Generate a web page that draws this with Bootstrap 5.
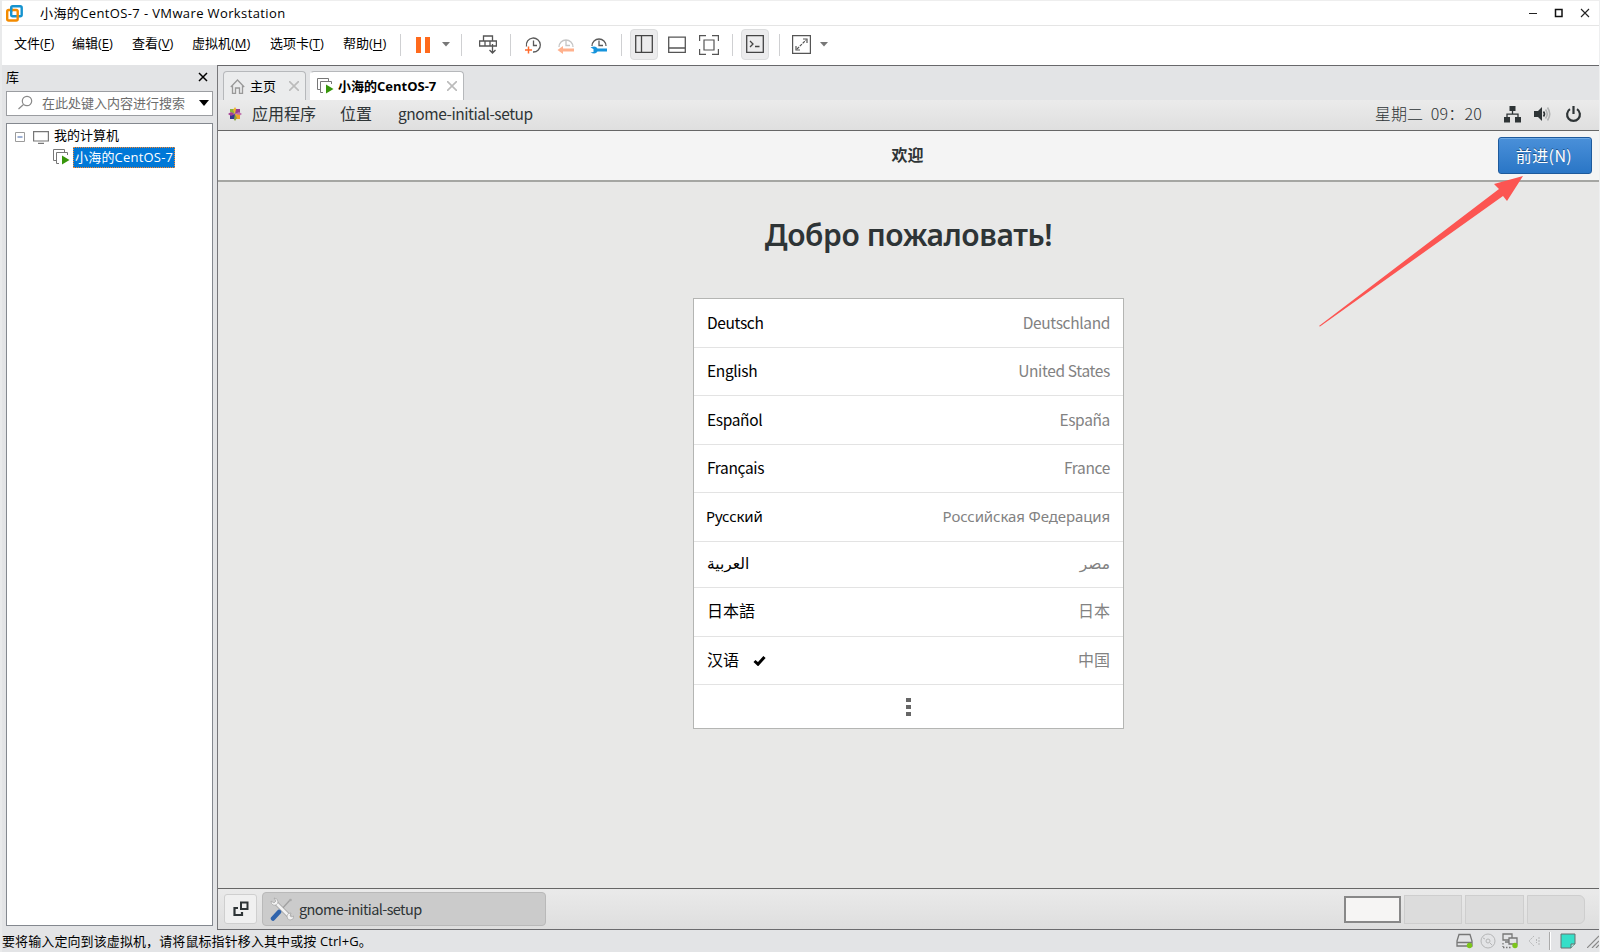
<!DOCTYPE html>
<html lang="zh-CN">
<head>
    <meta charset="UTF-8">
    <title>小海的CentOS-7 - VMware Workstation</title>
    <link href="https://cdn.jsdelivr.net/npm/bootstrap@5.3.0/dist/css/bootstrap.min.css" rel="stylesheet">
    <style>
        body {
            height: 952px;
            overflow: hidden;
            background: #e3e4e6;
            color: #000;
            font: 13px/18px "Open Sans", "Noto Sans CJK SC", sans-serif;
            border-left: 2px solid #e9eaeb;
            border-right: 1px solid #eeeff0;
        }
        svg { display: block; flex: none; fill: none; }

        /* title and menu */
        .title-bar { height: 26px; border-top: 1px solid #eee; border-bottom: 1px solid #e5e5e5; }
        .title-text { margin-left: 17px; font-size: 13px; letter-spacing: .38px; }
        .win-buttons { gap: 16px; padding-right: 9px; }
        .menu-row { height: 39px; }
        .menus { width: 391px; padding: 0 0 6px 12px; font-size: 13px; }
        .menus span { white-space: nowrap; }
        .menus span:nth-child(1) { width: 58px; }
        .menus span:nth-child(2), .menus span:nth-child(3) { width: 60px; }
        .menus span:nth-child(4) { width: 78px; }
        .menus span:nth-child(5) { width: 73px; }
        .menus u { text-underline-offset: 2px; }
        .tools {
            display: grid;
            margin: -2px 0 0 3px;
            grid-template-columns: 8px 37px 9px 22px 31px 14px 32px 34px 31px 14px 32px 34px 30px 16px 30px 18px 27px 18px;
            align-items: center;
            justify-items: center;
        }
        .split { width: 1px; height: 22px; background: #cfd0d2; }
        .tool-on { width: 28px; height: 31px; padding: 6px 5px; background: #ececed; border: 1px solid #dcddde; border-radius: 4px; }
        .tool-on svg { margin: -1px 0 0 -1px; }

        /* library */
        .library { width: 215px; padding: 0 4px 4px 4px; }
        .library-head { height: 26px; padding: 0 5px 2px 0; }
        .search-box { height: 25px; border: 1px solid #9b9da1; background: #fff; color: #6d6d6d; padding: 0 3px 2px 11px; }
        .tree { margin-top: 7px; border: 1px solid #84888f; background: #fff; }
        .tree-line { height: 22px; }
        .tree-sel { height: 21px; line-height: 18px; padding: 0 1px; background: #0078d7; color: #fff; border: 1px dotted #ff8728; letter-spacing: .2px; }

        /* console */
        .console-area { border-left: 1px solid #77777a; border-top: 1px solid #68686b; border-bottom: 1px solid #6b6b6e; }
        .tab-strip { height: 34px; padding: 5px 0 0 5px; gap: 4px; }
        .vm-tab { border: 1px solid #b6b8bb; border-bottom: 0; border-radius: 4px 4px 0 0; padding: 0 6px; background: #ebeced; }
        .vm-tab.on { background: #fff; font-weight: 700; font-size: 13px; border-left-color: #fff; }
        .gnome { font-family: "Noto Sans CJK SC", sans-serif; font-size: 16px; color: #2e3436; }
        .top-panel { height: 31px; background: linear-gradient(#ebebeb, #dfdfdf); border-bottom: 1px solid #666; padding: 0 0 2px 10px; }
        .panel-text, .app-name { padding-bottom: 2px; }
        .app-name { font-size: 15.5px; letter-spacing: -.45px; }
        .setup-head { height: 51px; background: #f4f4f4; border-bottom: 2px solid #a5a6a3; }
        .next-btn {
            width: 94px; height: 37px; padding: 0 2px 2px 0; margin-right: 7px;
            border: 1px solid #1e5a9c; border-radius: 3px;
            background: linear-gradient(#4a90d9, #2a76c6);
            box-shadow: inset 0 1px #6faae6;
            color: #fff; font-size: 16px; letter-spacing: .4px;
            text-shadow: 0 -1px #1c5187;
        }
        .page { background: #e8e8e7; }
        .welcome { height: 116px; padding-top: 33px; font: 600 30px/40px "Noto Sans", sans-serif; letter-spacing: -.4px; color: #2e3436; }
        .lang-list { width: 431px; height: 431px; border: 1px solid #b4b5b3; background: #fff; color: #000; }
        .lang-row { height: 48.5px; padding: 0 13px 2px; border-bottom: 1px solid #e3e3e3; font-size: 15.5px; letter-spacing: -.35px; }
        .lang-row.arab { height: 46.5px; font-family: "DejaVu Sans", sans-serif; font-size: 15.5px; letter-spacing: 0; padding-bottom: 0; }
        .lang-row.cyr { font-family: "Noto Sans", sans-serif; font-size: 15px; letter-spacing: -.1px; padding-left: 12px; padding-bottom: 1px; }
        .lang-row.cjk { font-size: 16px; letter-spacing: 0; padding-bottom: 3px; }
        .country { color: #828282; }
        .task-bar { height: 41px; border-top: 1px solid #666; background: linear-gradient(#eaeaea, #dedede); padding: 0 14px 0 6px; }
        .desk-btn { width: 33px; height: 30px; border: 1px solid #cfcfcf; border-radius: 3px; background: #f0f0f0; }
        .task-btn { width: 284px; height: 34px; margin-left: 5px; padding-left: 7px; border: 1px solid #b9b9b9; border-radius: 4px; background: #cbcbcb; }
        .task-name { font-size: 14.5px; letter-spacing: -.6px; }
        .workspaces { gap: 3px; }
        .workspace { width: 58.5px; height: 29px; background: #dcdcdc; border: 1px solid #cecece; }
        .workspace.on { width: 57px; height: 27px; background: #f6f5f4; border: 2px solid #888; }
        .status-bar { height: 22px; letter-spacing: .1px; }

        .pointer-arrow { position: absolute; left: 1310px; top: 170px; pointer-events: none; }
    </style>
</head>
<body class="d-flex flex-column">

<!-- Window title -->
<header class="title-bar bg-white d-flex align-items-center">
    <svg class="ms-1" width="17" height="17" viewBox="0 0 17 17" stroke-width="2.4"><rect x="5.2" y="1.2" width="10.5" height="10" rx="1.5" stroke="#1593cf"/><rect x="1.2" y="5" width="10.5" height="10.5" rx="1.5" stroke="#f38b00"/><path d="M5.2 7V3" stroke="#1593cf"/></svg>
    <span class="title-text">小海的CentOS-7 - VMware Workstation</span>
    <div class="win-buttons d-flex align-items-center ms-auto">
        <svg width="10" height="10" stroke="#222"><path d="M1 5.5h8"/></svg>
        <svg width="10" height="10" stroke="#111" stroke-width="1.5"><rect x="1.5" y="1.5" width="6.5" height="7"/></svg>
        <svg width="10" height="10" stroke="#222" stroke-width="1.1"><path d="m1 1 8 8M9 1 1 9"/></svg>
    </div>
</header>

<!-- Menu and tool bar -->
<nav class="menu-row bg-white d-flex">
    <div class="menus d-flex align-items-center">
        <span>文件(<u>F</u>)</span>
        <span>编辑(<u>E</u>)</span>
        <span>查看(<u>V</u>)</span>
        <span>虚拟机(<u>M</u>)</span>
        <span>选项卡(<u>T</u>)</span>
        <span>帮助(<u>H</u>)</span>
    </div>
    <div class="tools">
        <i class="split"></i>
        <svg width="14" height="18"><path d="M0 1h5v16H0zM9 1h5v16H9z" fill="#ff6a1c"/></svg>
        <svg width="8" height="5"><path d="M0 0h8L4 4.5z" fill="#777"/></svg>
        <i class="split"></i>
        <svg width="18" height="19" stroke="#555" stroke-width="1.3"><path d="M4.500 6V1h9v5M.6 6h10.400v5H.6zM11 6h6.400v5H11M6 6v5M13.500 9v9M10.500 15l3 3 3-3"/></svg>
        <i class="split"></i>
        <svg width="18" height="18" stroke="#5a5a5a" stroke-width="1.3"><path d="M2.500 10.500A7 7 0 1 1 9 16M9.500 4.500v5H13"/><path d="M1 14h7M4.500 10.500v7" stroke="#ff6a2c" stroke-width="1.500"/></svg>
        <svg width="18" height="18" stroke="#c5c5c5" stroke-width="1.3"><path d="M2 11a7 7 0 1 1 14 0M9 4.500v5h4"/><path d="M17 12.500H6V10l-5.500 4L6 18v-2.500h11z" fill="#ffb18d" stroke="none"/></svg>
        <svg width="18" height="18" stroke="#5a5a5a" stroke-width="1.3"><path d="M2 10a7 7 0 1 1 14 0M9 4.500v5h4"/><path d="M.5 11.500q5-2.500 7 1h9.500v3H7.500q-2 3.500-7 1L3.500 16v-3z" fill="#1694dc" stroke="none"/></svg>
        <i class="split"></i>
        <span class="tool-on"><svg width="18" height="18" stroke="#444" stroke-width="1.3"><path d="M.7.7h16.600v16.600H.7zM6.500 .7v16.600"/></svg></span>
        <svg width="18" height="18" stroke="#555" stroke-width="1.3"><path d="M.7 1.200h16.600v15.200H.7zM.7 12h16.600"/></svg>
        <svg width="20" height="20" stroke="#555" stroke-width="1.200"><path d="M.6 6V.6H7M13 .6h6.400V6M19.400 14v5.400H13M7 19.400H.6V14M5 5h10v10H5z"/></svg>
        <i class="split"></i>
        <span class="tool-on"><svg width="18" height="18" stroke="#444" stroke-width="1.300"><path d="M.7.7h16.600v16.600H.7zM4 6l3 3-3 3M9 11.500h4.500"/></svg></span>
        <i class="split"></i>
        <svg width="19" height="19" stroke="#555" stroke-width="1.200"><path d="M.6.6h17.800v17.800H.6zM4 11v4h4M11 4h4v4"/><path d="m5 14 9-9" stroke-dasharray="3 1"/></svg>
        <svg width="8" height="5"><path d="M0 0h8L4 4.500z" fill="#777"/></svg>
    </div>
</nav>

<div class="d-flex flex-grow-1">
    <!-- Library -->
    <aside class="library d-flex flex-column">
        <div class="library-head d-flex align-items-center justify-content-between">
            <span>库</span>
            <svg width="10" height="10" stroke="#000" stroke-width="1.500"><path d="m1 1 8 8M9 1 1 9"/></svg>
        </div>
        <div class="search-box d-flex align-items-center">
            <svg width="15" height="15" stroke="#8a8a8a" stroke-width="1.200"><circle cx="9" cy="6" r="4.700"/><path d="m5.500 9.500-5 4.500"/></svg>
            <span class="text-nowrap" style="margin-left:9px">在此处键入内容进行搜索</span>
            <svg class="ms-auto" width="10" height="6"><path d="M0 0h10L5 6z" fill="#000"/></svg>
        </div>
        <div class="tree flex-grow-1">
            <div class="tree-line d-flex align-items-center">
                <svg class="ms-2 mt-1" width="10" height="10"><path d="M.5.5h9v9h-9z" stroke="#9b9b9b"/><path d="M2.500 5h5" stroke="#3f62a8"/></svg>
                <svg class="mt-1" style="margin-left:8px" width="16" height="13" stroke="#777" stroke-width="1.200"><path d="M.6.6h14.800v9.400H.6zM5 12.400h6"/></svg>
                <span style="margin-left:5px">我的计算机</span>
            </div>
            <div class="tree-line d-flex align-items-center">
                <svg style="margin-left:46px" width="17" height="16" stroke="#777"><path d="M3 11.500H.5V.5h11V3M6 14.500H3.500v-11h11V6"/><path d="m9 6.500 7.500 4.500L9 15.500z" fill="#37960b" stroke="none"/></svg>
                <span class="tree-sel text-nowrap" style="margin-left:3px">小海的CentOS-7</span>
            </div>
        </div>
    </aside>

    <!-- Virtual machine -->
    <main class="console-area flex-grow-1 d-flex flex-column">
        <div class="tab-strip d-flex">
            <div class="vm-tab d-flex align-items-center" style="width:83px">
                <svg width="15" height="15" stroke="#999" stroke-width="1.300"><path d="m.8 8 6.700-7 6.700 7M2.500 6.500v7.800h3V9h4v5.300h3V6.500"/></svg>
                <span style="margin-left:5px">主页</span>
                <svg class="ms-auto" width="10" height="10" stroke="#bbb" stroke-width="1.600"><path d="m0 0 10 10M10 0 0 10"/></svg>
            </div>
            <div class="vm-tab on d-flex align-items-center" style="width:154px">
                <svg width="17" height="16" stroke="#777"><path d="M3 11.500H.5V.5h11V3M6 14.500H3.500v-11h11V6"/><path d="m9 6.500 7.500 4.500L9 15.500z" fill="#37960b" stroke="none"/></svg>
                <span class="text-nowrap" style="margin-left:4px">小海的CentOS-7</span>
                <svg class="ms-auto" width="10" height="10" stroke="#bbb" stroke-width="1.600"><path d="m0 0 10 10M10 0 0 10"/></svg>
            </div>
        </div>

        <div class="gnome flex-grow-1 d-flex flex-column">
            <div class="top-panel d-flex align-items-center">
                <svg width="14" height="14"><path d="M2 2h4l1 5-5-2z" fill="#8cb43c"/><path d="M7 0 5 3l2 4 2-4z" fill="#efb734"/><path d="M8 2h4v4L7 7z" fill="#9c3d90"/><path d="m14 7-3-2-4 2 4 2z" fill="#c072ad"/><path d="M12 8v4H8L7 7z" fill="#f0a42c"/><path d="m7 14 2-3-2-4-2 4z" fill="#8aa53d"/><path d="M6 12H2V8l5-1z" fill="#35388f"/><path d="m0 7 3-2 4 2-4 2z" fill="#a63f92"/></svg>
                <span class="panel-text" style="margin-left:10px;width:88px">应用程序</span>
                <span class="panel-text" style="width:58px">位置</span>
                <span class="app-name">gnome-initial-setup</span>
                <span class="panel-text fw-light ms-auto" style="letter-spacing:.2px">星期二&nbsp; 09：20</span>
                <svg style="margin-left:22px" width="17" height="17"><path d="M5.500 0h6v5h-6zM0 11h6v5.500H0zM11 11h6v5.500h-6z" fill="#2e3436"/><path d="M8.500 5v3M3 11V8.200h11V11" stroke="#2e3436" stroke-width="1.300"/></svg>
                <svg style="margin-left:13px" width="17" height="16"><path d="M0 5h4l4-4v14l-4-4H0z" fill="#2e3436"/><path d="M9.500 5.500q2 2.500 0 5" stroke="#2e3436" stroke-width="1.600"/><path d="M11.500 3.500q3.500 4.500 0 9M13.500 1.500q4.500 6.500 0 13" stroke="#b1b3b3" stroke-width="1.600"/></svg>
                <svg style="margin:0 17px 0 14px" width="17" height="17" stroke="#2e3436" stroke-width="2.200"><path d="M5 3.200a6.400 6.400 0 1 0 7 0M8.500 0v8"/></svg>
            </div>

            <div class="setup-head d-flex align-items-center">
                <div style="width:99px"></div>
                <strong class="flex-grow-1 text-center pb-1">欢迎</strong>
                <button class="next-btn btn">前进(N)</button>
            </div>

            <div class="page flex-grow-1 d-flex flex-column align-items-center">
                <h1 class="welcome m-0">Добро пожаловать!</h1>
                <div class="lang-list" id="lang-list"></div>
            </div>

            <div class="task-bar d-flex align-items-center">
                <div class="desk-btn d-flex align-items-center justify-content-center">
                    <svg width="16" height="16" stroke="#2e3436" stroke-width="2"><path d="M8 1.500h6.500V8H8z"/><path d="M5 7H1.500v7H9v-3" stroke-width="2.200"/></svg>
                </div>
                <div class="task-btn d-flex align-items-center">
                    <svg width="24" height="24"><path d="M20 3 11 13" stroke="#a0a0a0" stroke-width="1.300"/><circle cx="20.500" cy="3" r="1.300" fill="#aaa"/><path d="M5 5 20 20" stroke="#999" stroke-width="4"/><path d="M5 5 20 20" stroke="#f2f2f2" stroke-width="2.800"/><path d="M1 4l3 2 2-2-2-3q4 0 4 4-1 4-5 3-2-1-2-4M17 19q0-3 4-3l-1 3 2 1 2-1q0 4-4 4-3 0-3-4" fill="#f4f4f4" stroke="#999" stroke-width=".6"/><path d="m9 15-6 6.500" stroke="#2f63ac" stroke-width="4.500" stroke-linecap="round"/></svg>
                    <span class="task-name" style="margin-left:5px">gnome-initial-setup</span>
                </div>
                <div class="workspaces d-flex align-items-center ms-auto">
                    <div class="workspace on"></div>
                    <div class="workspace"></div>
                    <div class="workspace"></div>
                    <div class="workspace rounded-end"></div>
                </div>
            </div>
        </div>
    </main>
</div>

<!-- Status -->
<footer class="status-bar d-flex align-items-center">
    <span>要将输入定向到该虚拟机，请将鼠标指针移入其中或按 Ctrl+G。</span>
    <div class="d-flex align-items-center ms-auto">
        <svg width="18" height="16" stroke="#777" stroke-width="1.300"><path d="m1 8 2-6.500h11L16 8v5H1zM1 9.500h15"/><circle cx="13.500" cy="12.500" r="2.700" fill="#7cc51d" stroke="none"/></svg>
        <svg style="margin-left:6px" width="16" height="16" stroke="#b5b6b7"><circle cx="8" cy="8" r="7"/><circle cx="8" cy="8" r="2"/><path d="m3 5 2 1M10 10l2 2"/></svg>
        <svg style="margin-left:6px" width="17" height="16" stroke="#777" stroke-width="1.300"><path d="M1 1h9v6H1zM3 9h5"/><path d="M7 5h8v6H7z" fill="#e3e4e6"/><path d="M1 14.500h9M1 10v4" stroke-dasharray="1.500 1.500"/><circle cx="13" cy="12.500" r="2.700" fill="#7cc51d" stroke="none"/></svg>
        <svg style="margin-left:9px" width="12" height="14" stroke="#b5b6b7"><path d="M6 2 1 7l5 5M8.500 5v4M11 3v8" stroke-dasharray="2 1"/></svg>
        <i class="split bg-white" style="width:2px;margin:0 9px;height:18px;border-left:1px solid #aaa"></i>
        <svg width="16" height="16"><path d="M1 1h14v10l-4 4H1z" fill="#36dfc8" stroke="#66716f"/><path d="M11 15v-4h4" fill="#9feee3" stroke="#66716f"/></svg>
        <svg style="margin-left:11px" width="12" height="14" stroke="#888" stroke-width="1.200"><path d="M0 14 12 2M5 14l7-7M9 14l3-3"/></svg>
    </div>
</footer>

<svg class="pointer-arrow" width="220" height="160"><path d="m213 6-29 8 5 5L9 156l1 .5L193 26l4 5z" fill="#fc5552"/></svg>

<script src="https://cdn.jsdelivr.net/npm/bootstrap@5.3.0/dist/js/bootstrap.bundle.min.js"></script>
<script>
    const languages = [
        { name: 'Deutsch', country: 'Deutschland' },
        { name: 'English', country: 'United States' },
        { name: 'Español', country: 'España' },
        { name: 'Français', country: 'France' },
        { name: 'Русский', country: 'Российская Федерация', cls: 'cyr' },
        { name: 'العربية', country: 'مصر', cls: 'arab' },
        { name: '日本語', country: '日本', cls: 'cjk' },
        { name: '汉语', country: '中国', cls: 'cjk', selected: true }
    ];
    const check = '<svg style="margin:3px 0 0 14px" width="13" height="11"><path d="m1.500 6 3.500 3.200L11.500 2" stroke="#000" stroke-width="3"/></svg>';
    const list = document.getElementById('lang-list');

    languages.forEach(lang => {
        list.insertAdjacentHTML('beforeend', `
            <div class="lang-row d-flex align-items-center ${lang.cls || ''}">
                <span>${lang.name}</span>${lang.selected ? check : ''}
                <span class="country ms-auto">${lang.country}</span>
            </div>
        `);
    });

    // "more" row
    list.insertAdjacentHTML('beforeend', `
        <div class="d-flex justify-content-center" style="padding-top:13px">
            <svg width="5" height="18"><path d="M0 0h5v4H0zM0 7h5v4H0zM0 14h5v4H0z" fill="#666"/></svg>
        </div>
    `);
</script>
</body>
</html>
